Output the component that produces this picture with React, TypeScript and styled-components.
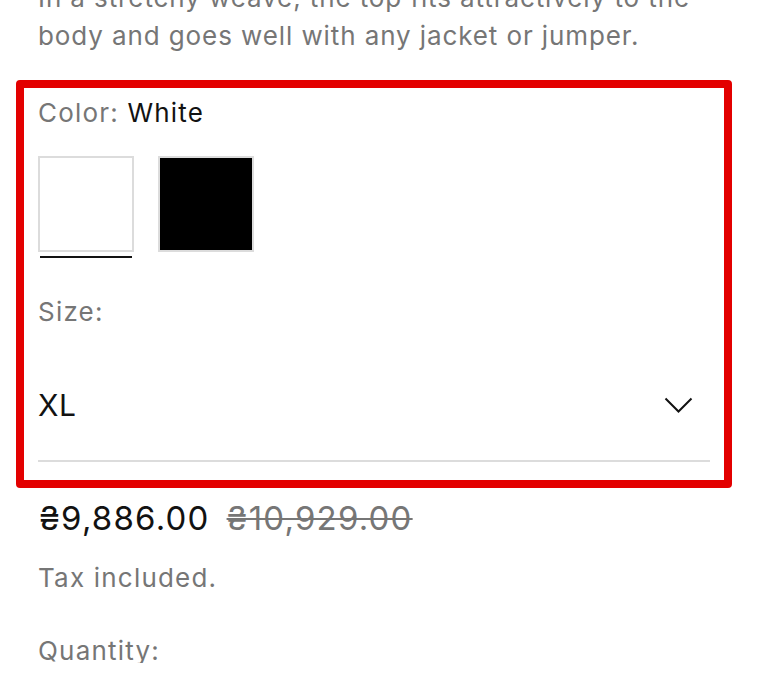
import React, { useState } from 'react';
import styled, { createGlobalStyle } from 'styled-components';

const GlobalStyle = createGlobalStyle`
  html, body {
    margin: 0;
    padding: 0;
    background: #ffffff;
  }
  body {
    font-family: Inter, "Noto Sans", sans-serif;
    color: #121212;
    overflow: hidden;
  }
`;

const colors = [
  { name: 'White', value: '#ffffff' },
  { name: 'Black', value: '#000000' },
];

const App = () => {
  const [color, setColor] = useState<string>('White');

  return (
    <Page>
      <GlobalStyle />
      <Outside>
        <Description>
          In a stretchy weave, the top fits attractively to the body and goes well with any jacket or jumper.
        </Description>
      </Outside>
      <Highlight>
        <Label>
          Color: <Value>{color}</Value>
        </Label>
        <Swatches>
          {colors.map((c) => (
            <Swatch key={c.name} onClick={() => setColor(c.name)}>
              <SwatchBox $fill={c.value} />
              <Underline $active={color === c.name} />
            </Swatch>
          ))}
        </Swatches>
        <SizeLabel>Size:</SizeLabel>
        <Select>
          <span>XL</span>
          <svg width="29" height="17" viewBox="0 0 29 17" fill="none">
            <polyline points="1.5,1.5 14.5,14.5 27.5,1.5" stroke="#121212" strokeWidth="2" />
          </svg>
        </Select>
        <Divider />
      </Highlight>
      <Outside>
        <PriceRow>
          <Price>₴9,886.00</Price>
          <OldPrice>₴10,929.00</OldPrice>
        </PriceRow>
        <Tax>Tax included.</Tax>
        <Quantity>Quantity:</Quantity>
      </Outside>
    </Page>
  );
};

export default App;

const Page = styled.div`
  width: 766px;
  height: 684px;
  box-sizing: border-box;
  padding: 0 34px 0 16px;
`;

const Outside = styled.div`
  padding-left: 22px;
`;

const Description = styled.p`
  margin: -21px 0 25px;
  font-size: 26px;
  line-height: 38px;
  letter-spacing: 0.9px;
  color: #767676;
  width: 680px;
`;

const Highlight = styled.div`
  border: 8px solid #e30000;
  border-radius: 4px;
  padding: 6px 14px 18px;
`;

const Label = styled.div`
  font-size: 26px;
  line-height: 38px;
  letter-spacing: 1.2px;
  color: #767676;
`;

const Value = styled.span`
  color: #121212;
`;

const Swatches = styled.div`
  display: flex;
  gap: 24px;
  margin-top: 24px;
`;

const Swatch = styled.div`
  display: flex;
  flex-direction: column;
  gap: 4px;
  cursor: pointer;
`;

const SwatchBox = styled.div<{ $fill: string }>`
  width: 96px;
  height: 96px;
  box-sizing: border-box;
  border: 2px solid #dcdcdc;
  background: ${(p) => p.$fill};
`;

const Underline = styled.div<{ $active: boolean }>`
  height: 2px;
  margin: 0 2px;
  background: ${(p) => (p.$active ? '#121212' : 'transparent')};
`;

const SizeLabel = styled(Label)`
  margin-top: 35px;
`;

const Select = styled.div`
  display: flex;
  align-items: center;
  justify-content: space-between;
  margin-top: 54px;
  padding-right: 17px;
  font-size: 30px;
  line-height: 40px;
  letter-spacing: 0.6px;
  color: #121212;
`;

const Divider = styled.div`
  height: 2px;
  margin-top: 35px;
  background: #dcdcdc;
`;

const PriceRow = styled.div`
  display: flex;
  align-items: baseline;
  gap: 17px;
  margin-top: 10px;
  padding-left: 1px;
  font-size: 33px;
  line-height: 40px;
  letter-spacing: 1.2px;
`;

const Price = styled.span`
  color: #121212;
`;

const OldPrice = styled.span`
  color: #767676;
  text-decoration: line-through;
  text-decoration-thickness: 2px;
`;

const Tax = styled.div`
  margin-top: 21px;
  font-size: 26px;
  line-height: 38px;
  letter-spacing: 1.2px;
  color: #767676;
`;

const Quantity = styled(Tax)`
  margin-top: 35px;
`;
